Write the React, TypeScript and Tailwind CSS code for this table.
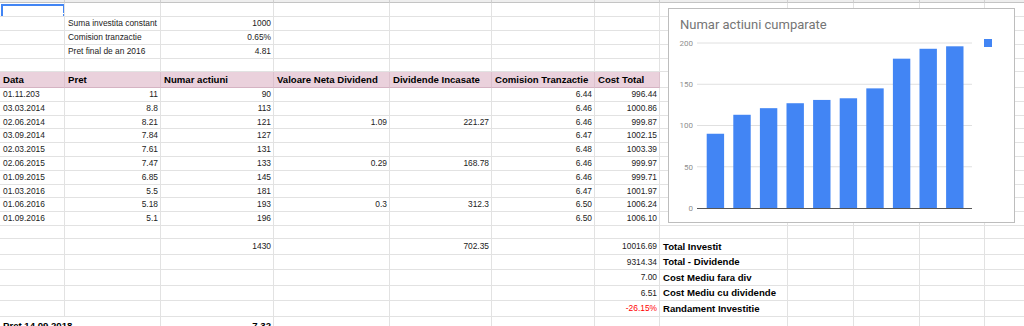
import React from "react";

const W = [
  "w-[65px]",
  "w-[96px]",
  "w-[113px]",
  "w-[116px]",
  "w-[102px]",
  "w-[103px]",
  "w-[65px]",
  "w-[128px]",
  "w-[66px]",
  "w-[66px]",
  "w-[65px]",
  "w-[60px]",
];

type C = { t: string; r?: boolean; b?: boolean; red?: boolean } | null;

function Row({
  h,
  cells = [],
  header = false,
  overflowA = false,
  selected = false,
  top = false,
}: {
  h: string;
  cells?: C[];
  header?: boolean;
  overflowA?: boolean;
  selected?: boolean;
  top?: boolean;
}) {
  return (
    <div className={`flex shrink-0 ${h}`}>
      {W.map((w, i) => {
        const c = cells[i] ?? null;
        const pink = header && i < 7;
        const base = `shrink-0 flex whitespace-nowrap border-b pl-[3px] pr-[2px] relative ${top ? "items-start pt-[4px]" : "items-center"}`;
        const bg = pink
          ? "bg-[#ead1dc] border-b-[#d5b3c3] border-r-[#dcc1cd]"
          : "bg-white border-b-[#e2e2e2] border-r-[#e2e2e2]";
        const br = overflowA && i === 0 ? "overflow-visible z-10" : "border-r overflow-hidden";
        const align = c && c.r ? "justify-end" : "justify-start";
        const font = c && c.b ? "font-bold text-[9.6px] text-black" : "text-[8.4px] text-[#222]";
        const color = c && c.red ? "text-[#ff0000]" : "";
        return (
          <div key={i} className={`${base} ${w} ${bg} ${br} ${align}`}>
            {c && <span className={`leading-none ${font} ${color}`}>{c.t}</span>}
            {selected && i === 0 && (
              <>
                <div className="absolute left-[1px] top-[1px] w-[64px] h-[14px] border-2 border-[#4285f4]" />
                <div className="absolute right-[-3px] bottom-[-2px] w-[5px] h-[5px] bg-[#4285f4] border border-white" />
              </>
            )}
          </div>
        );
      })}
    </div>
  );
}

const L = (t: string): C => ({ t });
const R = (t: string): C => ({ t, r: true });
const B = (t: string): C => ({ t, b: true });
const BR = (t: string): C => ({ t, b: true, r: true });

const data: [string, string, string, string, string, string, string][] = [
  ["01.11.203", "11", "90", "", "", "6.44", "996.44"],
  ["03.03.2014", "8.8", "113", "", "", "6.46", "1000.86"],
  ["02.06.2014", "8.21", "121", "1.09", "221.27", "6.46", "999.87"],
  ["03.09.2014", "7.84", "127", "", "", "6.47", "1002.15"],
  ["02.03.2015", "7.61", "131", "", "", "6.48", "1003.39"],
  ["02.06.2015", "7.47", "133", "0.29", "168.78", "6.46", "999.97"],
  ["01.09.2015", "6.85", "145", "", "", "6.46", "999.71"],
  ["01.03.2016", "5.5", "181", "", "", "6.47", "1001.97"],
  ["01.06.2016", "5.18", "193", "0.3", "312.3", "6.50", "1006.24"],
  ["01.09.2016", "5.1", "196", "", "", "6.50", "1006.10"],
];
const dataH = ["h-[14px]", "h-[14px]", "h-[13px]", "h-[14px]", "h-[14px]", "h-[14px]", "h-[14px]", "h-[13px]", "h-[14px]", "h-[14px]"];

const bars = [90, 113, 121, 127, 131, 133, 145, 181, 193, 196];

function Chart() {
  const y = (v: number) => 199 - 0.825 * v;
  return (
    <div className="absolute left-[668px] top-[8px] w-[347px] h-[215px] bg-white border border-[#bdbdbd] z-20">
      <div className="absolute left-[11px] top-[8px] text-[13px] leading-[16px] text-[#757575] font-['Roboto',sans-serif] whitespace-nowrap">
        Numar actiuni cumparate
      </div>
      <svg className="absolute left-0 top-0" width="345" height="213" viewBox="0 0 345 213">
        {[200, 150, 100, 50].map((v) => (
          <line key={v} x1="28" x2="303" y1={y(v)} y2={y(v)} stroke="#e0e0e0" strokeWidth="1" />
        ))}
        {[200, 150, 100, 50, 0].map((v) => (
          <text
            key={v}
            x="24"
            y={y(v) + 2.9}
            textAnchor="end"
            fontSize="8"
            fill="#8f8f8f"
            fontFamily="Roboto, sans-serif"
          >
            {v}
          </text>
        ))}
        {bars.map((v, i) => (
          <rect key={i} x={37.7 + i * 26.6} y={y(v)} width="17.4" height={199 - y(v)} fill="#4285f4" />
        ))}
        <line x1="28" x2="303" y1="199.5" y2="199.5" stroke="#555" strokeWidth="1" />
        <rect x="315" y="30" width="8" height="8" fill="#4285f4" />
      </svg>
    </div>
  );
}

export default function App() {
  return (
    <div className="relative w-[1024px] h-[326px] overflow-hidden bg-white font-['Liberation_Sans',Arial,sans-serif]">
      <div className="flex h-[3px]">
        {W.map((w, i) => (
          <div key={i} className={`shrink-0 ${w} h-[3px] bg-[#eeeeee] border-r border-b border-r-[#d0d0d0] border-b-[#c4c4c4]`} />
        ))}
      </div>
      <Row h="h-[14px]" selected />
      <Row h="h-[14px]" cells={[null, L("Suma investita constant"), R("1000")]} />
      <Row h="h-[14px]" cells={[null, L("Comision tranzactie"), R("0.65%")]} />
      <Row h="h-[14px]" cells={[null, L("Pret final de an 2016"), R("4.81")]} />
      <Row h="h-[13px]" />
      <Row
        h="h-[16px]"
        header
        cells={[
          B("Data"),
          B("Pret"),
          B("Numar actiuni"),
          B("Valoare Neta Dividend"),
          B("Dividende Incasate"),
          B("Comision Tranzactie"),
          B("Cost Total"),
        ]}
      />
      {data.map((d, k) => (
        <Row
          key={k}
          h={dataH[k]}
          cells={[
            L(d[0]),
            R(d[1]),
            R(d[2]),
            d[3] ? R(d[3]) : null,
            d[4] ? R(d[4]) : null,
            R(d[5]),
            R(d[6]),
          ]}
        />
      ))}
      <Row h="h-[13px]" />
      <Row h="h-[16px]" cells={[null, null, R("1430"), null, R("702.35"), null, R("10016.69"), B("Total Investit")]} />
      <Row h="h-[15px]" cells={[null, null, null, null, null, null, R("9314.34"), B("Total - Dividende")]} />
      <Row h="h-[16px]" cells={[null, null, null, null, null, null, R("7.00"), B("Cost Mediu fara div")]} />
      <Row h="h-[15px]" cells={[null, null, null, null, null, null, R("6.51"), B("Cost Mediu cu dividende")]} />
      <Row
        h="h-[16px]"
        cells={[null, null, null, null, null, null, { t: "-26.15%", r: true, red: true }, B("Randament Investitie")]}
      />
      <Row h="h-[20px]" overflowA top cells={[B("Pret 14.09.2018"), null, BR("7.32")]} />
      <Chart />
    </div>
  );
}
